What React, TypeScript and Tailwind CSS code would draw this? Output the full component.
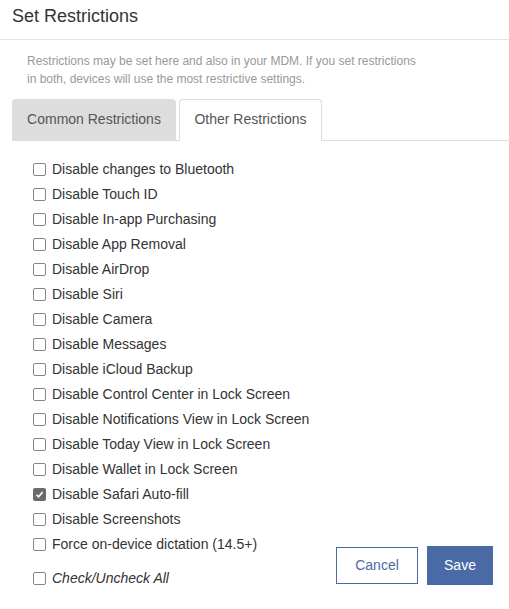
import React, { useState } from 'react'

const items = [
  'Disable changes to Bluetooth',
  'Disable Touch ID',
  'Disable In-app Purchasing',
  'Disable App Removal',
  'Disable AirDrop',
  'Disable Siri',
  'Disable Camera',
  'Disable Messages',
  'Disable iCloud Backup',
  'Disable Control Center in Lock Screen',
  'Disable Notifications View in Lock Screen',
  'Disable Today View in Lock Screen',
  'Disable Wallet in Lock Screen',
  'Disable Safari Auto-fill',
  'Disable Screenshots',
  'Force on-device dictation (14.5+)',
]

const Box: React.FC<{ checked: boolean }> = ({ checked }) =>
  checked ? (
    <span className="flex h-[13px] w-[13px] shrink-0 items-center justify-center rounded-[2px] bg-[#6b6b6b]">
      <svg width="9" height="9" viewBox="0 0 9 9" fill="none">
        <path d="M1.5 4.8 L3.6 6.8 L7.6 2" stroke="white" strokeWidth="1.6" />
      </svg>
    </span>
  ) : (
    <span className="h-[13px] w-[13px] shrink-0 rounded-[2px] border border-[#858585] bg-white" />
  )

export default function App() {
  const [checked, setChecked] = useState<Record<string, boolean>>({
    'Disable Safari Auto-fill': true,
  })

  const toggle = (name: string) =>
    setChecked((c) => ({ ...c, [name]: !c[name] }))

  return (
    <div className="h-[609px] w-[509px] bg-white font-['Liberation_Sans',Arial,sans-serif] text-[#333]">
      <div className="flex h-[40px] items-center border-b border-[#e5e5e5] px-3 pb-[8px]">
        <h1 className="text-[18px] leading-none">Set Restrictions</h1>
      </div>
      <p className="pl-[27px] pt-[12px] text-[12px] leading-[18px] text-[#999]">
        Restrictions may be set here and also in your MDM. If you set restrictions
        <br />
        in both, devices will use the most restrictive settings.
      </p>
      <div className="ml-3 mt-[11px] flex gap-[3px] border-b border-[#ddd]">
        <button className="-mb-px h-[42px] w-[164px] rounded-t-[4px] bg-[#ddd] pb-[2px] text-[14px] text-[#555]">
          Common Restrictions
        </button>
        <button className="-mb-px h-[42px] w-[143px] rounded-t-[4px] border border-b-white border-[#ddd] bg-white pb-[2px] text-[14px] text-[#555]">
          Other Restrictions
        </button>
      </div>
      <div className="flex items-end justify-between pr-4 pt-[16px]">
        <div className="flex flex-col pl-[33px]">
          {items.map((name) => (
            <label
              key={name}
              className="flex h-[25px] cursor-pointer items-center gap-[6px] text-[14px]"
              onClick={() => toggle(name)}
            >
              <Box checked={!!checked[name]} />
              {name}
            </label>
          ))}
          <label className="mt-[9px] flex h-[25px] items-center gap-[6px] text-[14px] italic">
            <Box checked={false} />
            Check/Uncheck All
          </label>
        </div>
        <div className="mb-[6px] flex items-center gap-[9px]">
          <button className="h-[37px] w-[82px] border border-[#4a6aa5] text-[14px] text-[#4a6aa5]">
            Cancel
          </button>
          <button className="h-[39px] w-[66px] bg-[#4a6aa5] text-[14px] text-white">
            Save
          </button>
        </div>
      </div>
    </div>
  )
}
